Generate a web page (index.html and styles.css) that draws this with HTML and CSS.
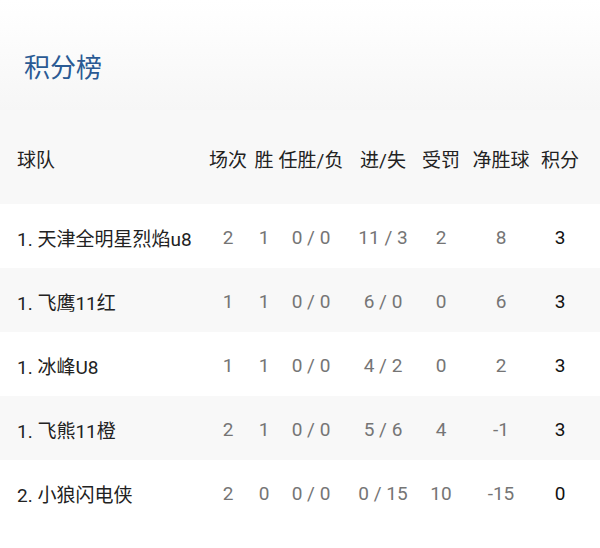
FILE: index.html
```html
<!DOCTYPE html>
<html lang="zh">
<head>
<meta charset="utf-8">
<link rel="stylesheet" href="styles.css">
</head>
<body>
<div class="page">
  <div class="title-bar"><h1 class="title">积分榜</h1></div>
  <div class="row head">
    <div class="team">球队</div>
    <div class="c">场次</div>
    <div class="c">胜</div>
    <div class="c">任胜/负</div>
    <div class="c">进/失</div>
    <div class="c">受罚</div>
    <div class="c">净胜球</div>
    <div class="c">积分</div>
  </div>
  <div class="row">
    <div class="team">1. 天津全明星烈焰u8</div>
    <div class="c n">2</div><div class="c n">1</div><div class="c n">0 / 0</div><div class="c n">11 / 3</div><div class="c n">2</div><div class="c n">8</div><div class="c pts">3</div>
  </div>
  <div class="row alt">
    <div class="team">1. 飞鹰11红</div>
    <div class="c n">1</div><div class="c n">1</div><div class="c n">0 / 0</div><div class="c n">6 / 0</div><div class="c n">0</div><div class="c n">6</div><div class="c pts">3</div>
  </div>
  <div class="row">
    <div class="team">1. 冰峰U8</div>
    <div class="c n">1</div><div class="c n">1</div><div class="c n">0 / 0</div><div class="c n">4 / 2</div><div class="c n">0</div><div class="c n">2</div><div class="c pts">3</div>
  </div>
  <div class="row alt">
    <div class="team">1. 飞熊11橙</div>
    <div class="c n">2</div><div class="c n">1</div><div class="c n">0 / 0</div><div class="c n">5 / 6</div><div class="c n">4</div><div class="c n">-1</div><div class="c pts">3</div>
  </div>
  <div class="row">
    <div class="team">2. 小狼闪电侠</div>
    <div class="c n">2</div><div class="c n">0</div><div class="c n">0 / 0</div><div class="c n">0 / 15</div><div class="c n">10</div><div class="c n">-15</div><div class="c pts">0</div>
  </div>
</div>
</body>
</html>
```
FILE: styles.css
```css
html, body {
  margin: 0;
  padding: 0;
  background: #fff;
}
.page {
  width: 600px;
  font-family: Roboto, "Noto Sans CJK SC", sans-serif;
  color: #222;
}
.title-bar {
  height: 110px;
  display: flex;
  align-items: center;
  padding-left: 24px;
  box-sizing: border-box;
  background: linear-gradient(#ffffff 0%, #fdfdfd 25%, #f6f6f6 100%);
}
.title {
  margin: 0;
  font-size: 26px;
  font-weight: 400;
  color: #2a5a94;
  padding-top: 20px;
}
.row {
  display: grid;
  grid-template-columns: 193px 36px 36px 58px 86px 30px 90px 28px;
  align-items: center;
  justify-items: center;
  padding: 3px 26px 0 17px;
  box-sizing: border-box;
  height: 64px;
  font-size: 19px;
  white-space: nowrap;
}
.row.head {
  height: 94px;
  padding-top: 2px;
  background: #f8f8f8;
  color: #222;
}
.row.alt {
  background: #f8f8f8;
}
.team {
  justify-self: start;
}
.n {
  color: #757575;
}
.pts {
  color: #111;
}
```
